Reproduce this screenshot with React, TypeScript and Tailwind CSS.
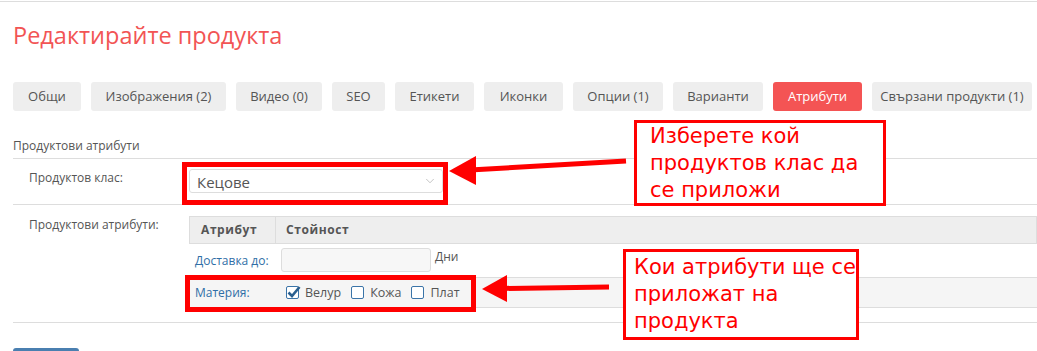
import { ChevronDown } from "lucide-react"

const tabs = [
  { label: "Общи", w: "w-[68px]" },
  { label: "Изображения (2)", w: "w-[135px]" },
  { label: "Видео (0)", w: "w-[86px]" },
  { label: "SEO", w: "w-[53px]" },
  { label: "Етикети", w: "w-[79px]" },
  { label: "Иконки", w: "w-[79px]" },
  { label: "Опции (1)", w: "w-[90px]" },
  { label: "Варианти", w: "w-[90px]" },
  { label: "Атрибути", w: "w-[89px]", active: true },
  { label: "Свързани продукти (1)", w: "w-[160px]" },
]

function Check({ checked, label }: { checked?: boolean; label: string }) {
  return (
    <label className="flex items-center gap-[6px]">
      <span className="relative h-[13px] w-[13px] rounded-[2px] border border-[#3a74a8] bg-white">
        {checked && (
          <svg className="absolute -left-[1px] -top-[3px]" width="16" height="16" viewBox="0 0 16 16">
            <path d="M2.5 8.5 L6 12 L13.5 3" fill="none" stroke="#2a5f8f" strokeWidth="2.6" />
          </svg>
        )}
      </span>
      <span className="text-[12.5px] leading-[17px] text-[#555]">{label}</span>
    </label>
  )
}

export default function App() {
  return (
    <div className="relative h-[351px] overflow-hidden bg-white font-['Open_Sans',sans-serif] text-[#555]">
      <div className="mt-px h-px bg-[#ddd]" />

      <div className="pl-[13px]">
        {/* Page title */}
        <h1 className="mt-[18px] text-[23.5px] leading-[30px] text-[#f25454]">Редактирайте продукта</h1>

        {/* Tabs */}
        <div className="mt-[32px] flex gap-[10px]">
          {tabs.map((t) => (
            <div
              key={t.label}
              className={`flex h-[29px] shrink-0 items-center justify-center whitespace-nowrap rounded-[3px] text-[13px] ${t.w} ${
                t.active ? "bg-[#f45454] text-white" : "bg-[#eee] text-[#555]"
              }`}
            >
              {t.label}
            </div>
          ))}
        </div>

        {/* Attributes section */}
        <div className="mt-[26px] pb-[4px] text-[12px] leading-[17px]">Продуктови атрибути</div>

        <div className="flex border-t border-[#ddd] pb-[11px] pt-[10px]">
          <div className="ml-[16px] w-[160px] text-[12px] leading-[17px]">Продуктов клас:</div>
          <div className="flex h-[24px] w-[254px] items-center justify-between rounded-[3px] border border-[#ddd] pl-[7px] pr-[5px] text-[15px]">
            <span className="mt-[3px]">Кецове</span>
            <ChevronDown size={14} strokeWidth={1} className="text-[#999]" />
          </div>
        </div>

        <div className="flex border-t border-b border-[#ddd] pb-[14px] pt-[11px]">
          <div className="ml-[16px] w-[160px] text-[12px] leading-[17px]">Продуктови атрибути:</div>
          <div className="flex-1">
            <div className="flex h-[28px] border border-[#ddd] bg-[#eee] text-[12px] font-bold tracking-[0.6px]">
              <div className="flex w-[86px] items-center border-r border-[#ddd] pl-[11px]">Атрибут</div>
              <div className="flex items-center pl-[10px]">Стойност</div>
            </div>
            <div className="flex h-[33px] text-[12px]">
              <div className="flex w-[86px] items-center pl-[6px] text-[#2f6ea6]">Доставка до:</div>
              <div className="flex items-start gap-[4px] pl-[6px] pt-[4px]">
                <div className="h-[24px] w-[150px] rounded-[3px] border border-[#ddd] bg-[#f7f7f7]" />
                <span className="leading-[17px]">Дни</span>
              </div>
            </div>
            <div className="flex h-[31px] border-y border-[#ddd] bg-[#f5f5f5] text-[12px]">
              <div className="flex w-[86px] items-center pl-[6px] text-[#2f6ea6]">Материя:</div>
              <div className="flex items-center gap-[10px] pl-[11px]">
                <Check checked label="Велур" />
                <Check label="Кожа" />
                <Check label="Плат" />
              </div>
            </div>
          </div>
        </div>

        <div className="mt-[25px] h-[30px] w-[66px] rounded-t-[3px] bg-[#4a7fb0]" />
      </div>

      {/* Annotations */}
      <div className="absolute left-[182px] top-[162px] h-[43px] w-[266px] border-[5px] border-[#ff0000]" />
      <div className="absolute left-[185px] top-[275px] h-[37px] w-[291px] border-[5px] border-[#ff0000]" />

      <svg className="absolute left-0 top-0" width="1037" height="351">
        <line x1="626" y1="161" x2="470" y2="170" stroke="#ff0000" strokeWidth="5" />
        <polygon points="449,171 476,156 476,185" fill="#ff0000" />
        <line x1="609" y1="287" x2="500" y2="288.5" stroke="#ff0000" strokeWidth="5" />
        <polygon points="482,289 507,275 507,302" fill="#ff0000" />
      </svg>

      <div className="absolute left-[634px] top-[120px] h-[86px] w-[252px] border-[3px] border-[#ff0000] bg-white pl-[13px] font-['DejaVu_Sans',sans-serif] text-[21px] leading-[27px] text-[#ff0000]">
        Изберете кой
        <br />
        продуктов клас да
        <br />
        се приложи
      </div>
      <div className="absolute left-[623px] top-[249px] h-[91px] w-[236px] border-[3px] border-[#ff0000] bg-white pl-[8px] pt-[2px] font-['DejaVu_Sans',sans-serif] text-[21px] leading-[27px] text-[#ff0000]">
        Кои атрибути ще се
        <br />
        приложат на
        <br />
        продукта
      </div>
    </div>
  )
}
